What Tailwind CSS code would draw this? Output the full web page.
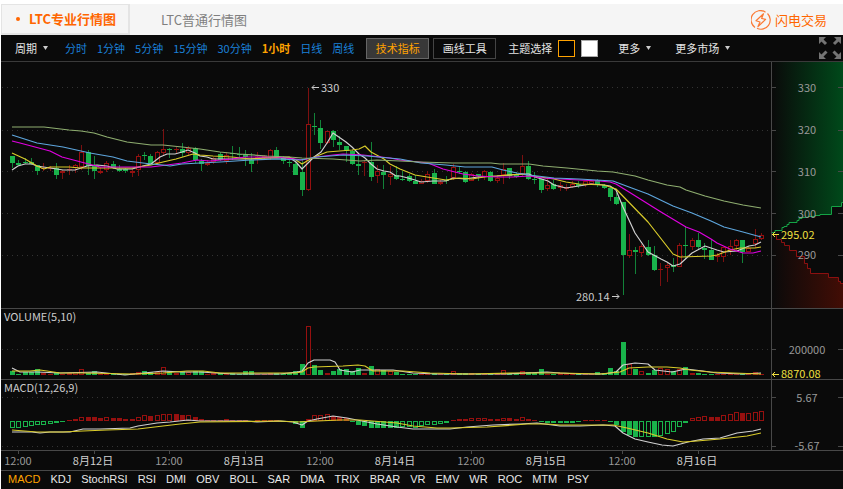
<!DOCTYPE html>
<html lang="zh-CN">
<head>
<meta charset="utf-8">
<title>LTC专业行情图</title>
<script src="https://cdn.jsdelivr.net/npm/@tailwindcss/browser@4"></script>
</head>
<body class="bg-white pt-1 pl-px font-['Noto_Sans_CJK_SC',sans-serif] text-[11px]">
<header class="flex h-[31px] items-stretch bg-[#f5f5f5] text-[13px]">
  <nav class="flex items-stretch">
    <a href="#pro" class="flex w-[129px] items-center border-2 border-t border-l border-[#e4e4e4] pl-[14px] font-bold text-[#ff6600]"><span class="mr-[9px] size-1 rounded-full bg-[#ff6600]"></span><span class="whitespace-nowrap">LTC专业行情图</span></a>
    <a href="#basic" class="flex items-center pl-[31px] whitespace-nowrap text-[#7f7f7f]">LTC普通行情图</a>
  </nav>
  <a href="#flash" class="mr-4 ml-auto flex items-center gap-1 text-[#ff6600]">
    <svg class="size-5" viewBox="0 0 20 20" fill="none" stroke="#fb7a35" stroke-width="1.2"><path d="M4 17.4A9.2 9.2 0 0 1 14.5 2.2M16.500 3.500A9.200 9.200 0 0 1 6 18.300"/><path d="M12.500 3.800 5 10.800l4 1.200-2 4.600 7.600-7.200-4-1z" stroke-linejoin="round"/></svg>
    <span>闪电交易</span>
  </a>
</header>

<div class="flex h-[27px] items-center border-b border-[#3a3a3a] bg-[#0a0a0a] pr-[2px] pl-[14px] whitespace-nowrap text-[#1a80d8]">
  <button class="flex items-center gap-[6px] text-[#e4e4e4]">周期 <svg class="h-1 w-[5px]" viewBox="0 0 5 4" fill="#ccc"><path d="M0 0h5L2.500 4z"/></svg></button>
  <div class="ml-[17px] flex gap-[10px]">
    <button>分时</button><button>1分钟</button><button>5分钟</button><button>15分钟</button><button>30分钟</button><button class="font-bold text-[#ffa200]">1小时</button><button>日线</button><button>周线</button>
  </div>
  <div class="ml-3 flex gap-1">
    <button class="flex h-[21px] w-[63px] items-center justify-center border border-[#666] bg-[#383838] text-[#ffa200]">技术指标</button>
    <button class="flex h-[21px] w-[63px] items-center justify-center border border-[#444] text-[#e4e4e4]">画线工具</button>
  </div>
  <span class="ml-3 text-[#e4e4e4]">主题选择</span>
  <button aria-label="黑色主题" class="ml-[6px] size-[17px] border border-[#ffa200] bg-black"></button>
  <button aria-label="白色主题" class="ml-[6px] size-[17px] border border-[#aaa] bg-white"></button>
  <button class="ml-5 flex items-center gap-[6px] text-[#e4e4e4]">更多 <svg class="h-1 w-[5px]" viewBox="0 0 5 4" fill="#ccc"><path d="M0 0h5L2.500 4z"/></svg></button>
  <button class="ml-6 flex items-center gap-[6px] text-[#e4e4e4]">更多市场 <svg class="h-1 w-[5px]" viewBox="0 0 5 4" fill="#ccc"><path d="M0 0h5L2.500 4z"/></svg></button>
  <button aria-label="全屏" class="ml-auto"><svg class="size-[22px]" viewBox="0 0 22 22" fill="#747474" stroke="#747474"><g stroke="none"><path d="M0 0h7L0 7zM22 0v7L15 0zM0 22v-7l7 7zM22 22h-7l7-7z"/></g><path stroke-width="3" d="M2.500 2.500 7 7M19.500 2.500 15 7M7.500 14.500 3 19M14.500 14.500 19 19"/></svg></button>
</div>

<main class="bg-[#0a0a0a]">
<svg id="chart" class="block h-auto w-full" viewBox="1 62 842 408" font-size="11" fill="none" role="img" aria-label="LTC K线图">
  <defs>
    <linearGradient id="bid"><stop stop-color="#0a0a0a"/><stop offset="1" stop-color="#00491a"/></linearGradient>
    <linearGradient id="ask"><stop stop-color="#0a0a0a"/><stop offset="1" stop-color="#420d05"/></linearGradient>
  </defs>
  <path fill="url(#bid)" d="M772 62V232H775V230H782V227H784V226H787V224H789V222H797V220H799V218H802V217H808V216H815V215H820V214H831V206H841V202H843V62z"/>
  <path fill="url(#ask)" d="M772 308V234H777V239H782V242H785V245H790V250H796V253H797V256H805V263H808V268H811V273H828V277H838V281H840V283H843V308z"/>
  <g stroke="#333" stroke-dasharray="1 4">
    <path d="M2 87.500H771M2 130.500H771M2 171.500H771M2 213.500H771M2 255.500H771M2 349.500H771M2 397.500H771M2 446.500H771"/>
  </g>
  <g stroke="#484848">
    <path d="M1 308.500H843M1 379.500H843M1 450.500H843M771.500 62V450M18.500 450v4M94.500 450v4M169.500 450v4M245.500 450v4M320.500 450v4M396.500 450v4M471.500 450v4M547.500 450v4M622.500 450v4M698.500 450v4"/>
    <path d="M772 87.500h4M772 130.500h4M772 171.500h4M772 213.500h4M772 255.500h4M772 349.500h4M772 397.500h4M772 446.500h4M838 87.500h5M838 130.500h5M838 171.500h5M838 213.500h5M838 255.500h5M838 349.500h5M838 397.500h5M838 446.500h5"/>
  </g>
  <g id="bars" shape-rendering="crispEdges"></g>
  <g stroke-width="1.200" stroke-linejoin="round">
    <polyline stroke="#d0d0d0" points="12,170 18,166 25,164 32,164 37,166 50,168 57,169 63,170 75,170 87,166 97,165 107,166 117,169 132,169 143,166 151,164 160,157 167,154 175,154 182,152 188,150 195,153 200,156 207,157 213,159 226,159 250,159 262,158 277,158 290,158 296,162 302,169 314,157 321,152 327,143 333,133 346,142 352,147 359,154 365,158 371,164 377,169 384,171 390,172 396,176 400,176 408,178 415,180 421,182 433,181 446,181 453,178 465,179 478,177 497,176 510,175 522,174 529,174 535,177 548,181 554,185 566,188 579,186 591,184 604,185 610,186 616,190 623,207 629,220 635,233 648,252 661,259 667,262 673,266 680,264 692,253 705,246 717,250 724,252 737,251 749,246 755,245 761,242"/>
    <polyline stroke="#d9cb2b" points="12,153 25,159 37,166 44,169 50,167 69,167 81,168 132,168 151,165 163,162 176,159 193,154 200,155 213,156 232,157 251,159 264,158 289,157 296,160 302,164 312,158 327,152 352,150 359,149 365,146 371,152 384,159 390,164 400,169 415,175 427,177 446,180 459,178 472,179 484,177 497,176 522,174 533,176 554,179 566,182 579,184 604,185 616,189 648,222 673,254 680,257 711,256 717,255 730,250 740,248 755,248 761,247"/>
    <polyline stroke="#e000e0" points="12,141 20,143 50,151 62,157 81,162 100,167 151,167 167,165 182,163 197,160 210,161 232,159 245,157 277,157 295,159 302,160 317,157 333,155 343,154 363,155 390,158 400,160 428,163 443,169 463,174 478,176 497,177 513,177 529,176 543,178 579,180 600,181 610,182 616,184 629,192 661,212 686,227 699,232 711,239 717,243 730,249 743,253 753,253 761,251"/>
    <polyline stroke="#5ea6dd" points="12,135 37,143 63,147 90,153 113,157 127,161 151,164 163,165 170,166 182,164 200,163 220,162 251,160 277,159 300,160 317,157 343,155 367,156 400,159 421,163 446,165 465,167 480,167 492,167 503,170 517,173 529,175 554,178 579,179 613,181 629,187 648,194 673,206 692,213 711,221 724,227 743,232 761,237"/>
    <polyline stroke="#8fae70" points="12,127 44,127 69,130 81,131 94,133 107,137 127,142 151,145 163,145 182,147 200,149 220,152 239,154 267,156 289,157 302,158 333,159 360,161 377,160 400,161 420,162 453,163 491,163 500,164 529,164 543,166 567,168 597,171 613,172 635,176 648,180 667,185 680,187 686,190 705,196 724,201 743,205 761,208"/>
    <polyline stroke="#d0d0d0" points="12,368 20,372 37,372 60,373 97,372 125,375 163,371 182,372 200,372 233,374 280,374 297,372 302,371 308,363 314,360 330,360 335,362 340,370 352,372 360,370 393,370 413,373 437,374 507,374 547,372 560,373 580,374 603,374 616,372 623,365 635,363 648,364 655,370 672,372 686,369 703,371 717,373 743,374 761,373"/>
    <polyline stroke="#d9cb2b" points="12,371 30,371 40,370 47,371 60,373 83,373 133,374 163,373 187,371 203,371 220,373 295,373 302,372 308,368 314,367 343,366 358,365 365,366 373,371 403,371 430,373 467,374 513,373 560,373 600,374 620,372 629,368 648,367 667,367 680,368 690,370 710,372 733,373 761,374"/>
    <polyline stroke="#d0d0d0" points="12,432 32,432 40,433 50,432 70,432 83,429 100,429 130,428 138,426 157,423 170,422 188,420 200,421 233,421 247,421 257,422 280,421 293,422 302,425 308,421 317,419 333,416 347,418 357,420 377,424 397,427 413,429 450,429 467,427 493,425 520,424 537,423 560,426 580,426 603,425 615,426 623,433 635,439 648,442 662,445 673,446 688,442 703,439 720,438 737,433 753,431 761,429"/>
    <polyline stroke="#d9cb2b" points="12,430 37,432 63,432 83,431 107,430 138,429 163,426 180,424 200,422 280,421 297,422 317,421 340,420 360,420 397,423 413,426 437,428 450,428 487,427 527,424 547,424 560,425 613,425 627,428 648,433 667,439 683,442 697,441 720,439 747,436 761,433"/>
  </g>
  <path stroke="#14a345" d="M772 232.500H775V230.500H782V227.500H784V226.500H787V224.500H789V222.500H797V220.500H799V218.500H802V217.500H808V216.500H815V215.500H820V214.500H831.500V206.500H841.500V202.500H843"/>
  <path stroke="#8c1010" d="M776.500 235V239.500H781.500V242.500H784.500V245.500H789.500V250.500H796.500V256.500H804.500V263.500H807.500V268.500H810.500V273.500H828.500V277.500H838.500V281.500H840.500V283.500H843"/>
  <g stroke="#ccc"><path d="M312 87.500h7M314.500 85l-2.500 2.500 2.500 2.500M612 296.500h7M616.500 294l2.500 2.500-2.500 2.500"/></g>
  <g stroke="#f0e040"><path d="M772 234.500h7M775 232l-2.500 2.500 2.500 2.500M772 374.500h7M775 372l-2.500 2.500 2.500 2.500"/></g>
  <g fill="#ccc">
    <text x="321" y="92">330</text><text x="576" y="301">280.14</text>
    <text x="4" y="321">VOLUME(5,10)</text><text x="4" y="392">MACD(12,26,9)</text>
  </g>
  <g fill="#999" text-anchor="middle">
    <text x="807" y="92">330</text><text x="807" y="134">320</text><text x="807" y="176">310</text><text x="807" y="218">300</text><text x="807" y="259">290</text>
    <text x="807" y="354">200000</text><text x="807" y="402">5.67</text><text x="807" y="450">-5.67</text>
    <text x="18" y="465">12:00</text><text x="169" y="465">12:00</text><text x="320" y="465">12:00</text><text x="471" y="465">12:00</text><text x="622" y="465">12:00</text>
  </g>
  <g fill="#d0d0d0" text-anchor="middle">
    <text x="93" y="465">8月12日</text><text x="244" y="465">8月13日</text><text x="395" y="465">8月14日</text><text x="546" y="465">8月15日</text><text x="697" y="465">8月16日</text>
  </g>
  <g fill="#f0e040"><text x="781" y="239">295.02</text><text x="781" y="378">8870.08</text></g>
</svg>

<nav class="flex h-[19px] items-center gap-[10px] border-t border-[#484848] pb-[2px] pl-[7px] font-['Liberation_Sans',sans-serif] whitespace-nowrap text-[#e8e8e8]">
  <button class="text-[#ffa200]">MACD</button><button>KDJ</button><button>StochRSI</button><button>RSI</button><button>DMI</button><button>OBV</button><button>BOLL</button><button>SAR</button><button>DMA</button><button>TRIX</button><button>BRAR</button><button>VR</button><button>EMV</button><button>WR</button><button>ROC</button><button>MTM</button><button>PSY</button>
</nav>
</main>

<script>
// direction, high, body top, body bottom, low
const candles = `g156,156,163,168 g160,163,165,166 g158,162,163,164 g158,162,164,165 g165,165,171,175 r163,168,169,171 r166,168,169,171 g163,168,175,179 r170,171,173,179 r165,169,170,175 r164,165,168,173 r145,152,167,170 g150,152,166,175 g156,166,171,179 r167,171,173,174 r161,163,170,172 g161,164,168,169 g165,169,171,172 g168,169,171,173 r169,171,173,177 r154,156,170,176 g152,155,156,160 g154,156,164,165 r151,152,163,164 r129,149,153,155 g148,149,150,158 r147,149,150,153 g143,149,153,157 r146,148,153,156 g147,148,160,163
g159,161,164,171 r160,163,165,166 r157,158,162,164 g152,154,160,161 r152,155,161,164 g146,153,154,160 g147,154,155,157 g150,154,157,166 g153,160,164,172 r152,157,158,164 r155,156,158,160 r149,150,158,160 g147,150,157,158 g156,158,161,164 g159,162,163,167 g162,164,175,175 g160,172,190,196 r88,124,190,191 g113,126,127,135 g120,128,143,149 r131,131,143,144 g130,131,140,147 g136,142,145,150 g146,146,151,162 g150,151,164,165 g153,164,166,175 r160,162,163,176 g142,162,177,181 r165,171,176,183 g165,172,175,189
r166,174,177,185 g166,175,179,180 g171,179,180,181 g174,176,181,182 g175,181,184,184 r179,181,184,184 r171,174,181,183 g169,173,184,184 r180,182,184,185 g176,180,181,184 r164,167,178,180 g167,171,172,174 g171,172,182,183 r173,174,181,181 g174,174,176,181 r170,171,177,180 g171,172,181,182 r176,178,181,183 r163,169,175,184 g168,168,176,179 g172,175,177,178 r155,166,175,177 g161,166,179,180 g172,179,180,184 g178,179,190,193 r177,185,189,191 g180,184,189,190 r182,185,188,191 r184,187,189,191 r181,184,187,188
g181,184,186,188 r181,181,185,187 r180,181,184,185 g179,180,185,187 g184,185,188,189 g188,188,197,201 g193,197,204,205 g202,202,255,295 r234,250,256,258 g247,250,252,274 r244,246,253,257 g240,247,255,256 g246,255,270,271 r263,269,270,286 r263,265,268,282 g258,265,267,272 r243,245,267,267 g226,245,246,259 r238,240,247,250 g233,240,247,249 g243,248,250,259 g239,250,260,260 r253,255,257,262 r247,247,257,262 r240,246,251,255 r239,240,246,251 g240,240,252,263 r247,248,252,252 r229,239,244,248 r233,235,239,240`.split(/\s+/);
const volumes = [4,1,3,3,6,2,1,3,1,2,3,6,2,4,1,2,1,1,1,2,3,4,3,3,8,4,2,4,3,4,4,1,2,2,2,2,1,4,4,1,1,2,2,1,2,4,11,49,10,5,2,4,6,6,4,7,2,9,6,5,4,3,1,1,1,1,1,2,1,1,4,2,2,2,1,1,1,1,5,2,2,4,3,2,6,1,1,2,1,2,1,1,1,3,2,7,4,33,11,6,4,2,5,7,6,4,6,8,2,2,1,1,1,1,1,1,1,1,3,1];
// an "h" after the height marks a hollow bar
const macd = "-7h -7h -6h -5h -4h -4h -3h -2 -1 1 2 4h 4 4 3 4h 3 3 2 2 4h 6h 5 6h 7h 7h 7 6 6h 4 2 1 1 1 2 1 1 1 -1 1 1 1 1 -1 -1 -3 -7 2 6h 6h 7h 5 4 3 -1 -4 -5 -7 -7 -7 -7 -7 -6h -6h -7h -5h -4h -4h -3h -2h 1 2h 2h 3h 3h 3h 2 2 3h 3 2 4h 2 1 -1 -2h -2h -2h -2h -2h -1 1 1 1 1 -1 -4 -11 -14 -16 -16h -16h -16 -15h -13h -11h -6h -2h 3h 4h 5h 4 4 6h 7h 9h 8 8h 9h 10h".split(" ");
const green = "#19b34b", red = "#96100f", layer = document.getElementById("bars");
function rect(x, y, w, h, color, hollow) {
  const e = document.createElementNS("http://www.w3.org/2000/svg", "rect");
  const inset = hollow && h > 2 ? 0.5 : 0;
  const attrs = { x: x + inset, y: y + inset, width: w - 2 * inset, height: h - 2 * inset };
  for (const k in attrs) e.setAttribute(k, attrs[k]);
  e.setAttribute("fill", inset ? "#0a0a0a" : color);
  if (inset) e.setAttribute("stroke", color);
  layer.appendChild(e);
}
candles.forEach((c, i) => {
  const up = c[0] === "r", color = up ? red : green;
  const [hi, top, bottom, lo] = c.slice(1).split(",").map(Number);
  const x = Math.round(12 + i * 6.294);
  rect(x, hi, 1, lo - hi, up ? "#7c1010" : "#128238");
  rect(x - 2, top, 5, bottom - top, color, up);
  rect(x - 2, 375 - volumes[i], 5, volumes[i], color, up);
  const m = parseInt(macd[i]);
  rect(x - 2, m > 0 ? 421 - m : 421, 5, Math.abs(m), m > 0 ? red : green, macd[i].endsWith("h"));
});
</script>
</body>
</html>
